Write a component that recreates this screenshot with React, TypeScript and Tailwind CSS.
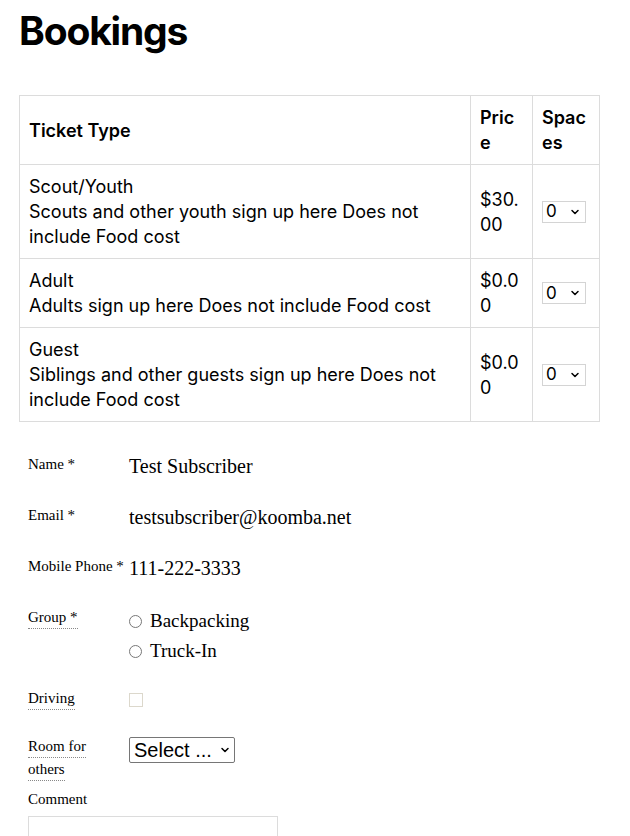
import { ChevronDown } from "lucide-react";

const TICKETS = [
  {
    name: "Scout/Youth",
    desc: "Scouts and other youth sign up here Does not include Food cost",
    price: "$30.00",
  },
  { name: "Adult", desc: "Adults sign up here Does not include Food cost", price: "$0.00" },
  {
    name: "Guest",
    desc: "Siblings and other guests sign up here Does not include Food cost",
    price: "$0.00",
  },
];

const cell = "border border-[#dcdcdc] px-[9px] py-[9px] align-middle";
const dottedLine = "border-b border-dotted border-[#888] pb-[3px]";

function SmallSelect() {
  return (
    <div className="w-[44px] h-[22px] border border-[#d4d4d4] flex items-center justify-between pl-[3px] pr-[4px] text-[17px] leading-none bg-white">
      <span>0</span>
      <ChevronDown size={12} strokeWidth={3} />
    </div>
  );
}

function Label({ children, dotted }: { children: React.ReactNode; dotted?: boolean }) {
  return (
    <div className="w-[101px] shrink-0 text-[15px] leading-[23px] whitespace-nowrap">
      <span className={dotted ? dottedLine : ""}>{children}</span>
    </div>
  );
}

export default function App() {
  return (
    <div className="bg-white text-black px-[19px] pt-[6px] pb-10 font-['Inter',sans-serif]">
      <h1 className="text-[39px] font-bold tracking-[-0.03em] leading-[50px] mb-[39px]">Bookings</h1>

      <table className="border-collapse w-[580px] text-[18px] leading-[25px] table-fixed">
        <colgroup>
          <col className="w-[451px]" />
          <col className="w-[62px]" />
          <col className="w-[67px]" />
        </colgroup>
        <thead>
          <tr>
            <th className={`${cell} text-left font-semibold`}>Ticket Type</th>
            <th className={`${cell} text-left font-semibold break-all`}>Price</th>
            <th className={`${cell} text-left font-semibold break-all`}>Spaces</th>
          </tr>
        </thead>
        <tbody>
          {TICKETS.map((t) => (
            <tr key={t.name}>
              <td className={cell}>
                {t.name}
                <br />
                {t.desc}
              </td>
              <td className={`${cell} break-all`}>{t.price}</td>
              <td className={cell}>
                <SmallSelect />
              </td>
            </tr>
          ))}
        </tbody>
      </table>

      <div className="font-['Liberation_Serif',serif] pl-[9px] pt-[31px]">
        <div className="flex items-start h-[51px]">
          <Label>Name *</Label>
          <div className="text-[20px] leading-[25px] mt-[1px]">Test Subscriber</div>
        </div>
        <div className="flex items-start h-[51px]">
          <Label>Email *</Label>
          <div className="text-[20px] leading-[25px] mt-[1px]">testsubscriber@koomba.net</div>
        </div>
        <div className="flex items-start h-[51px]">
          <Label>Mobile Phone *</Label>
          <div className="text-[20px] leading-[25px] mt-[1px]">111-222-3333</div>
        </div>
        <div className="flex items-start h-[81px]">
          <Label dotted>Group *</Label>
          <div className="flex flex-col text-[19px] leading-[30px]">
            <label className="flex items-center gap-[8px]">
              <span className="w-[13px] h-[13px] rounded-full border border-[#777] bg-white" />
              Backpacking
            </label>
            <label className="flex items-center gap-[8px]">
              <span className="w-[13px] h-[13px] rounded-full border border-[#777] bg-white" />
              Truck-In
            </label>
          </div>
        </div>
        <div className="flex items-start h-[48px]">
          <Label dotted>Driving</Label>
          <div className="pt-[6px]">
            <div className="w-[14px] h-[14px] border border-[#dcd8cc] bg-white" />
          </div>
        </div>
        <div className="flex items-start h-[53px]">
          <div className="w-[101px] shrink-0 text-[15px] leading-[23px]">
            <span className={dottedLine}>Room for</span>
            <br />
            <span className={dottedLine}>others</span>
          </div>
          <div className="mt-[2px] h-[26px] w-[106px] border border-[#767676] rounded-[2px] flex items-center justify-between pl-[4px] pr-[3px] text-[20px] leading-none font-['Liberation_Sans',sans-serif]">
            <span>Select ...</span>
            <ChevronDown size={12} strokeWidth={3} />
          </div>
        </div>
        <div className="text-[15px] leading-[23px]">Comment</div>
        <div className="w-[250px] h-[60px] border border-[#dcdcdc] mt-[5px]" />
      </div>
    </div>
  );
}
